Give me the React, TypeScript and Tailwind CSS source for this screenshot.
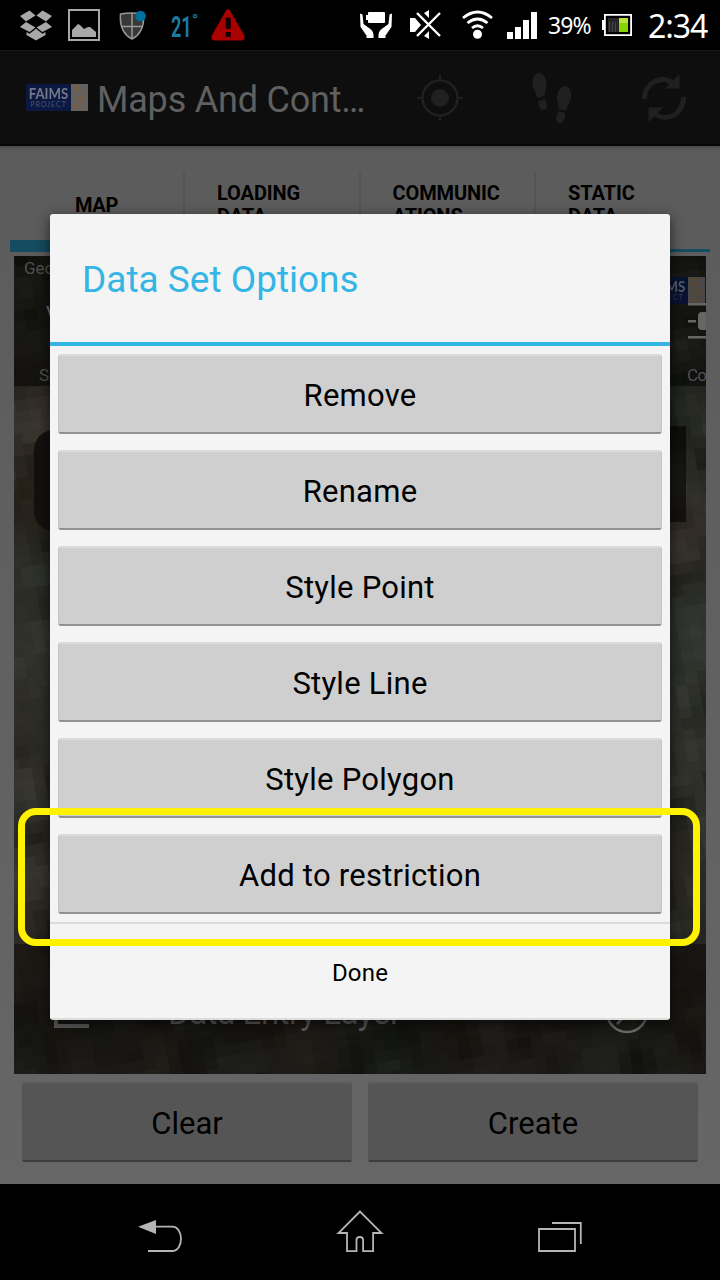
import React from "react";

type Box = { box: string; className?: string; children: React.ReactNode };

/** Inline drawing whose viewBox is also its natural pixel size. */
function Glyph({ box, className = "", children }: Box) {
  const [, , w, h] = box.split(" ").map(Number);
  return (
    <svg viewBox={box} width={w} height={h} className={`block shrink-0 ${className}`} fill="none">
      {children}
    </svg>
  );
}

function FaimsLogo({ className = "" }: { className?: string }) {
  return (
    <div className={`flex h-[27px] w-[62px] shrink-0 overflow-hidden ${className}`}>
      <div className="flex w-[45px] flex-col items-center bg-[#0b1942] pt-[2px] font-['Lato',sans-serif]">
        <span className="origin-center scale-x-[0.88] text-[15px] leading-[15px] font-bold text-[#747987]">FAIMS</span>
        <span className="text-[7px] leading-[7px] tracking-[1px] text-[#4b546f]">PROJECT</span>
      </div>
      <svg viewBox="0 0 17 27" width="17" height="27" className="block bg-[#63605d]" fill="none">
        <path
          d="M2 2.500h7M4 5.500h5v3M2 8.500h3M6 13.500h9M6 13.500v4M3 20.500h4M9 17.500h4M2 23.500h6M10 24.500h3"
          stroke="#8c5d28"
          strokeWidth="1"
        />
      </svg>
    </div>
  );
}

function StatusBar() {
  return (
    <header className="flex h-[50px] shrink-0 items-center bg-black">
      <Glyph box="20 10 32 31" className="ml-5">
        <g fill="#a8a8a8">
          <path d="M20 16 29.500 10.500 35.500 15.500 26 21.500ZM52 16 42.500 10.500 36.500 15.500 46 21.500ZM20 27 26 22 35.500 27.500 29.500 32ZM52 27 46 22 36.500 27.500 42.500 32Z" />
          <path d="M26.500 32v3L36 40.500 45.500 35v-3L42.500 33.700 36 28.700 29.500 33.700Z" />
        </g>
      </Glyph>
      <Glyph box="68 9 32 32" className="ml-4">
        <path d="M69 10h30v30H69Z" stroke="#a8a8a8" strokeWidth="2" />
        <path d="M72 37v-7l6-6 2 1 4 4 4-2h2l6 5v5Z" fill="#a8a8a8" />
      </Glyph>
      <Glyph box="119 9 28 31" className="ml-[19px]">
        <path d="M120.500 13q11-2 23 0c1 12-2 20-11.500 25-9.500-5-12.500-13-11.500-25Z" fill="#383838" stroke="#969696" strokeWidth="1.500" />
        <path d="M132 12v26M121 25.500h22" stroke="#999" strokeWidth="1.500" />
        <circle cx="140.500" cy="15" r="5.300" fill="#00719f" />
      </Glyph>
      <div className="ml-[24px] flex h-[30px] w-[29px] items-start font-['Roboto',sans-serif] font-bold text-[#197ba4]">
        <span className="w-[21px] origin-left scale-x-[0.6] text-[30px] leading-[33px]">21</span>
        <span className="-mt-[2px] text-[16px] leading-[26px]">°</span>
      </div>
      <Glyph box="211 8 34 34" className="ml-[11px]">
        <path d="M226 10.500q2-3 4 0L244 35q2 5-2.500 5.500h-27Q210 40 212 35Z" fill="#a90000" />
        <path d="M225.700 18.500q0-1 1-1h3q1 0 1 1V28q0 1-1 1h-3q-1 0-1-1ZM225.700 32h5v5h-5Z" fill="#100" />
      </Glyph>
      <Glyph box="360 11 34 28" className="ml-auto">
        <path d="M361 13.500 363.500 14.500 364.500 24 372 29.500Q374.500 32 374.500 34.500V38h-7v-2.500L361.500 27ZM393 13.500 390.500 14.500 389.500 24 382 29.500Q379.500 32 379.500 34.500V38h7v-2.500L392.500 27Z" fill="#fff" />
        <rect x="369" y="12" width="17" height="11" rx="1" fill="#fff" />
        <path d="M367 15h3v5h-3Z" fill="#fff" />
      </Glyph>
      <Glyph box="409 9 33 32" className="ml-4">
        <path d="M410 18h5l6 7-6 7h-5ZM424 13l5-3v8ZM424 36l5 3v-8Z" fill="#fff" />
        <path d="M417 13l23 23M440 13l-23 23" stroke="#000" strokeWidth="5" />
        <path d="M417 13l23 23M440 13l-23 23" stroke="#fff" strokeWidth="2.400" />
      </Glyph>
      <Glyph box="462 10 32 30" className="ml-5">
        <path d="M463 18q14.500-12 29 0M467.500 23q10-8 20 0M472 28q5.500-4.500 11 0" stroke="#fff" strokeWidth="2.800" />
        <circle cx="477.500" cy="34.300" r="4.500" fill="#fff" />
      </Glyph>
      <Glyph box="507 12 30 27" className="ml-[13px]">
        <path d="M507 32h6v7h-6ZM515 27h6v12h-6ZM523 20h6v19h-6ZM531 12h6v27h-6Z" fill="#fff" />
      </Glyph>
      <span className="ml-[11px] w-[54px] pt-px font-['Noto_Sans',sans-serif] text-[23px] tracking-[-0.9px] text-white">39%</span>
      <Glyph box="602 15 30 22">
        <path d="M604.900 15.900h26.200v20.200h-26.200Z" stroke="#fff" strokeWidth="1.800" />
        <path d="M602 21h3v10h-3Z" fill="#fff" />
        <path d="M608 19h11v14h-11Z" fill="#262626" />
        <path d="M609.500 23v10M612.500 23v10M615.500 23v10" stroke="#454545" />
        <path d="M619 19h9v14h-9Z" fill="#86d500" />
        <path d="M619 19h9v5h-9Z" fill="#b7e33b" />
      </Glyph>
      <span className="mr-2 ml-4 w-[64px] pt-px font-['Noto_Sans',sans-serif] text-[32px] tracking-[-1.1px] text-white">2:34</span>
    </header>
  );
}

function ActionBar() {
  return (
    <div className="flex h-24 shrink-0 items-center border-t border-b-2 border-t-[#151515] border-b-[#080808] bg-[#0e0e0e]">
      <FaimsLogo className="ml-[26px]" />
      <h1 className="ml-[9px] w-[319px] pt-[5px] font-['Roboto',sans-serif] text-[36px] tracking-[-0.2px] whitespace-nowrap text-[#606060]">Maps And Cont…</h1>
      <Glyph box="416 74 48 48">
        <g stroke="#202020">
          <circle cx="440" cy="98" r="17.500" strokeWidth="2.500" />
          <path d="M440 75v6M440 115v6M417 98h6M457 98h6" strokeWidth="2" />
        </g>
        <circle cx="440" cy="98" r="9" fill="#202020" />
      </Glyph>
      <Glyph box="532 72 42 52" className="ml-[68px]">
        <g fill="#202020">
          <path d="M539 73c5 0 8 6 7.500 13-.5 4-2 6-2 10l-7 2c-1-5-5-9-5-15 0-6 3-10 6.500-10ZM538 101l7-2c2 4 4 10-1 11-5 0-5-5-6-9Z" />
          <path d="M565 86c4 0 7 5 6 12-1 6-4 7-5 13l-7-2c0-5-2-7-2-11 0-7 4-12 8-12ZM558.500 111l7 2c0 4-1 10-6 10-5-1-3-7-1-12Z" />
        </g>
      </Glyph>
      <Glyph box="641 73 46 50" className="ml-[67px]">
        <path d="M644.500 99c0-17 18-25 29-15M683.500 97c0 18-18 26-29 16" stroke="#202020" strokeWidth="5" />
        <path d="M679.500 74v14.500h-14.500ZM648.500 122v-14.500h14.500Z" fill="#202020" />
      </Glyph>
    </div>
  );
}

function TabRow() {
  const tabs = [["LOADING", "DATA"], ["COMMUNIC", "ATIONS"], ["STATIC", "DATA"]];
  return (
    <nav className="flex h-[106px] shrink-0 flex-col bg-linear-to-b from-[#484848] to-transparent to-4% px-[10px] pt-[26px] font-['Roboto',sans-serif] text-[20px] leading-[23px] font-bold text-black">
      <div className="flex h-[68px]">
        <div className="flex w-[173px] items-center justify-center pb-[2px] tracking-[-0.4px]">MAP</div>
        {tabs.map(([a, b]) => (
          <div key={a} className="flex w-[175.5px] flex-col justify-center border-l-2 border-[#545454] pb-[2px] pl-8 tracking-[-0.1px]">
            <span>{a}</span>
            <span>{b}</span>
          </div>
        ))}
      </div>
      <div className="flex h-3 items-end">
        <div className="h-3 w-[174px] bg-[#164c61]" />
        <div className="h-[3px] grow bg-[#164c61]" />
      </div>
    </nav>
  );
}

const hash = (x: number, y: number) => {
  const n = Math.sin(x * 127.1 + y * 311.7) * 43758.5453;
  return n - Math.floor(n);
};
const smooth = (x: number, y: number) => {
  const i = Math.floor(x);
  const j = Math.floor(y);
  const u = x - i;
  const v = y - j;
  const top = hash(i, j) * (1 - u) + hash(i + 1, j) * u;
  const low = hash(i, j + 1) * (1 - u) + hash(i + 1, j + 1) * u;
  return top * (1 - v) + low * v;
};

/** Coarse aerial photograph: rotated tiles shifting between earth and scrub. */
function Imagery() {
  const tiles: React.ReactNode[] = [];
  for (let r = -3; r < 88; r++) {
    for (let c = -14; c < 64; c++) {
      const light = 27 + smooth(c / 2.3, r / 2.6) * 30 + (hash(c + 9, r + 5) - 0.5) * 5;
      const warm = (smooth(c / 4 + 40, r / 7 + 40) - 0.4) * 17;
      const rgb = [light + warm * 0.6 + 1, light + 1 - warm * 0.1, light - 5 - warm * 0.2].map(Math.round);
      tiles.push(<rect key={`${r}:${c}`} x={c * 12} y={r * 11} width="12.500" height="11.500" fill={`rgb(${rgb.join(",")})`} />);
    }
  }
  return (
    <svg viewBox="0 0 692 818" width="692" height="818" className="block">
      <g transform="rotate(-10)">{tiles}</g>
    </svg>
  );
}

function MapView() {
  return (
    <section className="relative mx-[14px] mt-1 h-[818px] shrink-0 overflow-hidden bg-[#25241e] font-['Roboto',sans-serif] text-[#505050]">
      <Imagery />
      <div className="absolute inset-x-0 top-0 h-[130px] bg-black/45" />
      <div className="absolute inset-x-0 bottom-0 h-[130px] bg-black/40" />
      <div className="absolute top-[174px] left-[20px] h-[101px] w-[120px] rounded-[20px] bg-[#12110e]" />
      <div className="absolute top-[170px] right-[20px] h-[96px] w-[120px] bg-black/55" />
      <span className="absolute top-[2px] left-[10px] text-[17px] leading-5">GeoTIFF</span>
      <span className="absolute top-[46px] left-[32px] text-[20px] leading-6 text-[#777]">V</span>
      <span className="absolute top-[109px] left-[25px] text-[17px] leading-5">Select</span>
      <span className="absolute top-[109px] left-[673px] text-[17px] leading-5 tracking-[-0.9px]">Co</span>
      <FaimsLogo className="absolute top-[21px] left-[629px] brightness-75" />
      <svg viewBox="0 0 32 40" width="32" height="40" className="absolute top-[46px] left-[673px]" fill="#666">
        <path d="M1 1h30v2.500H1ZM1 18h8v2.500H1ZM1 34h30v2.500H1Z" />
        <rect x="11" y="10" width="10" height="18" rx="4" />
      </svg>
      <svg viewBox="0 0 36 36" width="36" height="36" className="absolute top-[737px] left-[40px]">
        <path d="M2 0v33h33" fill="none" stroke="#606060" strokeWidth="4" />
      </svg>
      <span className="absolute top-[737px] left-[154px] text-[33px] leading-10 tracking-[-0.4px] whitespace-nowrap text-[#606060]">Data Entry Layer</span>
      <svg viewBox="0 0 44 44" width="44" height="44" className="absolute top-[734px] left-[591px]" fill="none" stroke="#707070" strokeWidth="2.500">
        <circle cx="22" cy="22" r="20" />
        <path d="M12 34l8-8" />
      </svg>
    </section>
  );
}

function BottomButtons() {
  return (
    <div className="flex gap-4 px-[22px] pt-2 pb-[22px] font-['Roboto',sans-serif] text-[31px] text-black">
      {["Clear", "Create"].map((t) => (
        <button key={t} className="h-20 flex-1 rounded-[3px] border-t-2 border-b-2 border-t-[#5c5c5c] border-b-[#3d3d3d] bg-[#555] pt-[2px] leading-none">
          {t}
        </button>
      ))}
    </div>
  );
}

function NavBar() {
  return (
    <footer className="flex h-24 shrink-0 items-center bg-black">
      <Glyph box="136 1208 48 48" className="ml-[136px]">
        <path d="M138 1226.700 156 1220v14Z" fill="#b5b5b5" />
        <path d="M155 1226.700h17c12 0 12 24.300 0 24.300h-24" stroke="#b5b5b5" strokeWidth="1.800" />
      </Glyph>
      <Glyph box="336 1208 48 48" className="ml-[152px]">
        <path
          d="M360 1211.500 338.500 1233h8.500v18.200h9.500V1240q0-3 3.300-3t3.300 3v11.200h10V1233h8.400Z"
          stroke="#b5b5b5"
          strokeWidth="1.800"
        />
      </Glyph>
      <Glyph box="536 1208 48 48" className="ml-[152px]">
        <path d="M539 1229h36v22h-36ZM552 1223h28.800v21" stroke="#b5b5b5" strokeWidth="1.800" />
      </Glyph>
    </footer>
  );
}

function OptionsDialog() {
  const options = ["Remove", "Rename", "Style Point", "Style Line", "Style Polygon", "Add to restriction"];
  return (
    <div
      role="dialog"
      className="absolute top-[214px] left-[50px] flex h-[806px] w-[620px] flex-col rounded-[3px] border-b-2 border-[#dcdcdc] bg-[#f4f4f4] font-['Roboto',sans-serif] text-black shadow-[0_4px_14px_0_rgba(0,0,0,0.65)]"
    >
      <h2 className="flex h-[132px] shrink-0 items-center border-b-4 border-[#33b5e5] px-8 pt-[3px] text-[37px] text-[#33b5e5]">Data Set Options</h2>
      <div className="flex flex-col gap-4 p-2">
        {options.map((t) => (
          <button key={t} className="h-20 rounded-[3px] border-x border-t-2 border-b-2 border-x-[#c4c4c4] border-t-[#dadada] border-b-[#929292] bg-[#cfcfcf] pt-[2px] text-[31px] leading-none tracking-[0.25px]">
            {t}
          </button>
        ))}
      </div>
      <button className="grow border-t-2 border-[#dadada] pt-[3px] text-[24px] tracking-[0.2px]">Done</button>
    </div>
  );
}

export default function App() {
  return (
    <main className="relative flex h-[1280px] w-[720px] flex-col overflow-hidden bg-linear-to-b from-[#5a5a5a] to-[#676767]">
      <StatusBar />
      <ActionBar />
      <TabRow />
      <MapView />
      <BottomButtons />
      <NavBar />
      <OptionsDialog />
      <div className="absolute top-[808px] left-[18px] h-[138px] w-[682px] rounded-[18px] border-7 border-[#fff200]" />
    </main>
  );
}
